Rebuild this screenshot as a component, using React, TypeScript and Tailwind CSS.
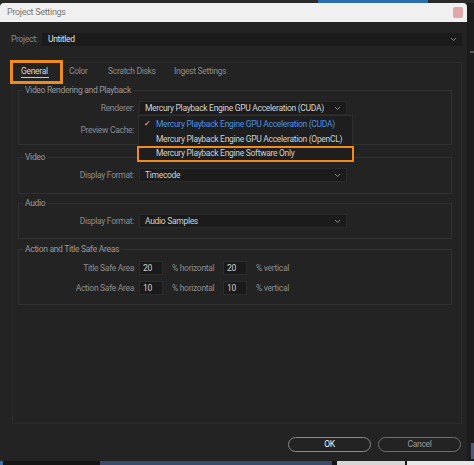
import { ReactNode } from 'react'

function Chevron() {
    return (
        <svg width="7" height="5" viewBox="0 0 7 5" className="flex-none">
            <path d="M1 1 L3.5 3.5 L6 1" fill="none" stroke="#8a8a8a" strokeWidth="1" />
        </svg>
    )
}

function Dropdown({ value }: { value: string }) {
    return (
        <div className="w-[208px] h-[14px] bg-[#1b1b1b] border border-[#2a2a2a] flex items-center pl-[5px] pr-[5px] text-[#d2d2d2]">
            <span className="flex-1 whitespace-nowrap">{value}</span>
            <Chevron />
        </div>
    )
}

function Label({ children }: { children: ReactNode }) {
    return (
        <div className="w-[115px] text-right text-[#8c8c8c] whitespace-nowrap">
            {children}
        </div>
    )
}

function Group({
    title,
    className,
    children,
}: {
    title: string
    className: string
    children: ReactNode
}) {
    return (
        <div className={'relative border border-[#303030] flex flex-col ' + className}>
            <span className="absolute -top-[6px] left-[4px] px-[2px] bg-[#232323] text-[#9a9a9a] leading-[11px] whitespace-nowrap">
                {title}
            </span>
            {children}
        </div>
    )
}

function NumBox({ value }: { value: string }) {
    return (
        <div className="w-[24px] h-[14px] bg-[#1a1a1a] border border-[#2c2c2c] flex items-center pl-[3px] text-[#d2d2d2]">
            {value}
        </div>
    )
}

export default function App() {
    return (
        <div className="w-[474px] h-[465px] bg-[#1e1e1e] flex flex-col overflow-hidden text-[8.5px] tracking-[-0.3px] font-['Roboto',sans-serif]">
            <div className="h-[3px] flex flex-none bg-[#2a2a2a]">
                <div className="w-[318px]" />
                <div className="w-[110px] bg-[#2b6cb0]" />
            </div>
            <div className="flex flex-1 min-h-0">
                <div className="w-[467px] flex flex-col">
                    <div className="h-[19px] flex-none bg-[#f0f0f0] rounded-t-[4px] flex items-center pl-[7px] pr-[4px]">
                        <span className="flex-1 text-[#777777] text-[9px]">Project Settings</span>
                        <div className="w-[10px] h-[11px] rounded-[2px] bg-[#e2a5ab]" />
                    </div>
                    <div className="flex-1 bg-[#232323] relative flex flex-col">
                        {/* project row */}
                        <div className="mt-[11px] h-[13px] flex items-center">
                            <span className="w-[42px] pl-[11px] text-[#8a8a8a]">Project:</span>
                            <div className="w-[420px] h-[13px] bg-[#1b1b1b] flex items-center pl-[6px] pr-[5px]">
                                <span className="flex-1 text-[#e0e0e0]">Untitled</span>
                                <Chevron />
                            </div>
                        </div>

                        {/* tab panel */}
                        <div className="mt-[16px] ml-[12px] w-[450px] h-[362px] border border-[#2b2b2b] flex flex-col pl-[5px] pr-[9px]">
                            <div className="h-[17px] flex items-center -ml-[5px] pl-[8px] whitespace-nowrap">
                                <span className="relative w-[48px] text-[#d8d8d8]">
                                    General
                                    <span className="absolute left-0 top-[12px] w-[28px] h-[1px] bg-[#c8c8c8]" />
                                </span>
                                <span className="w-[39px] text-[#8d8d8d]">Color</span>
                                <span className="w-[66px] text-[#8d8d8d]">Scratch Disks</span>
                                <span className="text-[#8d8d8d]">Ingest Settings</span>
                            </div>

                            <Group title="Video Rendering and Playback" className="mt-[10px] pt-[10px] pb-[7px] gap-[8px]">
                                <div className="h-[14px] flex items-center gap-[5px]">
                                    <Label>Renderer:</Label>
                                    <Dropdown value="Mercury Playback Engine GPU Acceleration (CUDA)" />
                                </div>
                                <div className="h-[14px] flex items-center gap-[5px]">
                                    <Label>Preview Cache:</Label>
                                </div>
                            </Group>

                            <Group title="Video" className="mt-[12px] pt-[10px] pb-[11px]">
                                <div className="h-[14px] flex items-center gap-[5px]">
                                    <Label>Display Format:</Label>
                                    <Dropdown value="Timecode" />
                                </div>
                            </Group>

                            <Group title="Audio" className="mt-[9px] pt-[10px] pb-[10px]">
                                <div className="h-[14px] flex items-center gap-[5px]">
                                    <Label>Display Format:</Label>
                                    <Dropdown value="Audio Samples" />
                                </div>
                            </Group>

                            <Group title="Action and Title Safe Areas" className="mt-[10px] pt-[11px] pb-[9px] gap-[6px]">
                                <div className="h-[14px] flex items-center whitespace-nowrap">
                                    <Label>Title Safe Area</Label>
                                    <div className="ml-[5px]"><NumBox value="20" /></div>
                                    <span className="ml-[9px] w-[51px] text-[#8c8c8c]">% horizontal</span>
                                    <NumBox value="20" />
                                    <span className="ml-[9px] text-[#8c8c8c]">% vertical</span>
                                </div>
                                <div className="h-[14px] flex items-center whitespace-nowrap">
                                    <Label>Action Safe Area</Label>
                                    <div className="ml-[5px]"><NumBox value="10" /></div>
                                    <span className="ml-[9px] w-[51px] text-[#8c8c8c]">% horizontal</span>
                                    <NumBox value="10" />
                                    <span className="ml-[9px] text-[#8c8c8c]">% vertical</span>
                                </div>
                            </Group>
                        </div>

                        {/* buttons */}
                        <div className="mt-[13px] flex justify-end gap-[7px] pr-[6px]">
                            <button className="w-[83px] h-[15px] rounded-full border border-[#8a8a8a] text-[#f2f2f2] flex items-center justify-center">
                                OK
                            </button>
                            <button className="w-[83px] h-[15px] rounded-full border border-[#6f6f6f] text-[#9a9a9a] flex items-center justify-center">
                                Cancel
                            </button>
                        </div>

                        {/* general tab highlight */}
                        <div className="absolute left-[10px] top-[38px] w-[53px] h-[24px] border-[3px] border-[#f08c1e]" />

                        {/* renderer menu */}
                        <div className="absolute left-[138px] top-[93px] w-[215px] h-[47px] bg-[#1e1e1e] border border-[#2e2e2e] pt-[1px] flex flex-col whitespace-nowrap">
                            <div className="h-[15px] flex items-center text-[#4f8fe0]">
                                <span className="w-[17px] pl-[5px] text-[#d8d8d8] text-[8px]">✓</span>
                                Mercury Playback Engine GPU Acceleration (CUDA)
                            </div>
                            <div className="h-[15px] flex items-center pl-[17px] text-[#cfcfcf]">
                                Mercury Playback Engine GPU Acceleration (OpenCL)
                            </div>
                            <div className="h-[15px] flex items-center pl-[17px] text-[#cfcfcf]">
                                Mercury Playback Engine Software Only
                            </div>
                        </div>
                        <div className="absolute left-[137px] top-[124px] w-[217px] h-[16px] border-2 border-[#f08c1e]" />
                    </div>
                </div>
                <div className="flex-1 bg-[#1c1c1c] flex flex-col">
                    <div className="h-[48px]" />
                    <div className="h-[2px] bg-[#555555] ml-[3px]" />
                    <div className="flex-1" />
                    <div className="h-[16px] bg-[#4a5a78] ml-[4px] mb-[2px]" />
                </div>
            </div>
            <div className="h-[4px] flex flex-none bg-[#151515]">
                <div className="w-[3px] bg-[#3b6fa8]" />
                <div className="w-[97px]" />
                <div className="w-[232px] bg-[#3b4a66]" />
                <div className="w-[5px]" />
                <div className="w-[68px] bg-[#d6d6d6]" />
                <div className="w-[2px]" />
                <div className="flex-1 bg-[#e8e8e8]" />
            </div>
        </div>
    )
}
